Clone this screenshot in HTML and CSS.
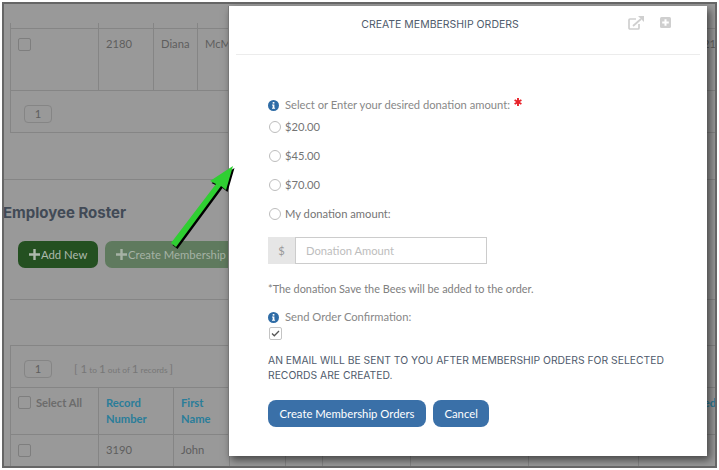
FILE: index.html
```html
<!DOCTYPE html>
<html lang="en">
<head>
<meta charset="utf-8">
<title>Create Membership Orders</title>
<link rel="stylesheet" href="styles.css">
</head>
<body>
<div class="frame">
  <table class="grid grid-top">
    <colgroup><col class="c1"><col class="c2"><col class="c3"><col class="c4"><col class="c5"></colgroup>
    <tr class="stub"><td></td><td></td><td></td><td></td><td></td></tr>
    <tr class="row-tall">
      <td><span class="box"></span></td><td>2180</td><td>Diana</td><td>McMillan</td><td class="end">1221</td>
    </tr>
    <tr class="row-pager"><td colspan="5"><span class="pager">1</span></td></tr>
  </table>
  <hr class="rule rule-a">
  <h2 class="roster">Employee Roster</h2>
  <div class="actions">
    <button class="act act-add" type="button"><svg class="plus" width="11" height="11" viewBox="0 0 11 11"><path d="M5.500 0v11M0 5.500h11" stroke="currentColor" stroke-width="2.400"/></svg>Add New</button>
    <button class="act act-create" type="button"><svg class="plus" width="11" height="11" viewBox="0 0 11 11"><path d="M5.500 0v11M0 5.500h11" stroke="currentColor" stroke-width="2.400"/></svg>Create Membership Orders</button>
  </div>
  <hr class="rule rule-b">
  <table class="grid grid-main">
    <colgroup><col class="m1"><col class="m2"><col class="m3"><col class="m4"><col class="m5"><col class="m6"><col class="m7"><col class="m8"><col class="m9"></colgroup>
    <tr class="row-pager"><td colspan="9"><span class="pager">1</span><span class="count"><big>[ 1</big> to <big>1</big> out of <big>1</big> records <big>]</big></span></td></tr>
    <tr class="row-head">
      <th class="sel"><div class="sel-in"><span class="box"></span>Select All</div></th>
      <th>Record Number</th><th>First Name</th><th></th><th></th><th></th><th></th><th></th><th class="end">Renewed</th>
    </tr>
    <tr class="row-body">
      <td><span class="box"></span></td><td>3190</td><td>John</td><td></td><td></td><td></td><td></td><td></td><td></td>
    </tr>
  </table>

  <section class="modal">
    <header class="modal-head">
      <h1 class="modal-title">CREATE MEMBERSHIP ORDERS</h1>
      <div class="modal-tools">
        <svg class="tool" width="16" height="14" viewBox="0 0 16 14"><path d="M11 8v4a1 1 0 0 1-1 1H2a1 1 0 0 1-1-1V4a1 1 0 0 1 1-1h6" fill="none" stroke="#cfcfcf" stroke-width="1.700"/><path d="M5 10L13 3" stroke="#cfcfcf" stroke-width="1.800"/><path d="M10 0h6v6z" fill="#cfcfcf"/></svg>
        <svg class="tool tool-plus" width="11" height="11" viewBox="0 0 11 11"><rect width="11" height="11" rx="1.500" fill="#cfcfcf"/><path d="M5.500 2.200v6.600M2.200 5.500h6.600" stroke="#fff" stroke-width="2"/></svg>
      </div>
    </header>
    <form class="modal-body">
      <div class="ask">
        <svg class="info" width="11" height="11" viewBox="0 0 11 11"><circle cx="5.500" cy="5.500" r="5.500" fill="#2f6ca6"/><rect x="4.700" y="2" width="1.700" height="1.600" fill="#fff"/><path d="M4 4.500h2.400v3.300h.7v1H4v-1h.7V5.500H4z" fill="#fff"/></svg>
        <span>Select or Enter your desired donation amount:</span>
        <svg class="star" width="8" height="8" viewBox="0 0 8 8"><path d="M4 0v8M.6 2L7.400 6M7.400 2L.6 6" stroke="#e8222a" stroke-width="1.900"/></svg>
      </div>
      <label class="choice"><span class="radio"></span>$20.00</label>
      <label class="choice"><span class="radio"></span>$45.00</label>
      <label class="choice"><span class="radio"></span>$70.00</label>
      <label class="choice"><span class="radio"></span>My donation amount:</label>
      <div class="amount"><span class="addon">$</span><span class="field">Donation Amount</span></div>
      <p class="note">*The donation Save the Bees will be added to the order.</p>
      <div class="confirm">
        <svg class="info" width="11" height="11" viewBox="0 0 11 11"><circle cx="5.500" cy="5.500" r="5.500" fill="#2f6ca6"/><rect x="4.700" y="2" width="1.700" height="1.600" fill="#fff"/><path d="M4 4.500h2.400v3.300h.7v1H4v-1h.7V5.500H4z" fill="#fff"/></svg>
        <span>Send Order Confirmation:</span>
      </div>
      <span class="check"><svg width="9" height="7" viewBox="0 0 9 7"><path d="M1 3.500l2.300 2.300L8 1" fill="none" stroke="#555" stroke-width="1.300"/></svg></span>
      <p class="notice">AN EMAIL WILL BE SENT TO YOU AFTER MEMBERSHIP ORDERS FOR SELECTED RECORDS ARE CREATED.</p>
      <div class="modal-actions">
        <button class="primary" type="button">Create Membership Orders</button>
        <button class="primary" type="button">Cancel</button>
      </div>
    </form>
  </section>

  <svg class="arrow" width="72" height="92" viewBox="0 0 72 92">
    <polygon points="63,2 56,26 51,22 6,83 1,79 46,20 40,17" fill="#000" transform="translate(1.500 2)"/>
    <polygon points="63,2 56,26 51,22 6,83 1,79 46,20 40,17" fill="#2fcf32"/>
  </svg>
</div>
</body>
</html>
```

FILE: styles.css
```css
* { box-sizing: border-box; }
html, body { margin: 0; padding: 0; background: #fff; }
body { width: 719px; height: 470px; overflow: hidden; font-family: Lato, "Open Sans", sans-serif; }

.frame {
  position: relative;
  width: 715px;
  height: 466px;
  margin: 2px 0 0 2px;
  border: 2px solid #666;
  background: #999;
  overflow: hidden;
  color: #5e5e5e;
  font-size: 11.200px;
}

.grid { border-collapse: collapse; table-layout: fixed; margin-left: 6px; }
.grid td, .grid th { border: 1px solid #858585; padding: 0; text-align: left; vertical-align: top; overflow: hidden; }
.grid-top { width: 706px; margin-top: 19px; }
.c1 { width: 88px; } .c2 { width: 55px; } .c3 { width: 44px; } .c4 { width: 484px; } .c5 { width: 35px; }
.stub td { height: 5px; border-top: 0; }
.row-tall td { height: 62px; padding: 8px 7px; white-space: nowrap; line-height: 14px; }
.row-tall td:first-child { padding: 9px 7px; }
.row-pager td { height: 42px; padding: 14px 13px 0; }
.end { text-align: right !important; padding-right: 0 !important; }

.box { display: block; width: 13px; height: 13px; border: 1px solid #7e7e7e; border-radius: 2px; flex: none; }
.pager {
  display: inline-block;
  width: 28px; height: 18px;
  border: 1px solid #858585; border-radius: 4px;
  text-align: center; line-height: 16px; vertical-align: top;
}

.rule { border: 0; border-top: 1px solid #858585; margin: 0; }
.rule-a { margin-top: 46px; }
.rule-b { margin: 31px 0 0 6px; }

.roster {
  margin: 25px 0 0 -1px;
  font-family: Inter, sans-serif;
  font-size: 15px; line-height: 16px; font-weight: 700;
  color: #414a56;
}

.actions { display: flex; gap: 7px; margin: 20px 0 0 14px; white-space: nowrap; }
.act {
  display: flex; align-items: center; gap: 1px;
  height: 27px; border: 0; border-radius: 7px; padding: 0 11px;
  font: 11.300px Lato, sans-serif; flex: none;
}
.act-add { width: 80px; background: #245021; color: #aeb9ad; }
.act-create { background: #5f7a5e; color: #a6b2a5; }
.plus { flex: none; }

.grid-main { width: 706px; margin-top: 45px; }
.m1 { width: 88px; } .m2 { width: 75px; } .m3 { width: 56px; } .m4 { width: 56px; } .m5 { width: 37px; }
.m6 { width: 88px; } .m7 { width: 118px; } .m8 { width: 110px; } .m9 { width: 78px; }
.count { margin-left: 22px; font-size: 8.300px; line-height: 18px; color: #777; vertical-align: top; }
.count big { font-size: 11.500px; }
.row-head th { height: 45px; padding: 7px; line-height: 16px; font-weight: 700; color: #2a7d99; }
.row-head th.sel { padding: 8px 7px; color: #6c6c6c; }
.sel-in { display: flex; gap: 5px; white-space: nowrap; line-height: 14px; }
.row-body td { height: 40px; padding: 8px 7px; line-height: 14px; }
.row-body td:first-child { padding: 9px 7px; }

.modal {
  position: absolute;
  left: 224px; top: 2px;
  width: 479px; height: 450px;
  background: #fff;
  border-left: 1px solid #777;
  box-shadow: 3px 4px 8px rgba(0,0,0,.55);
  z-index: 2;
  color: #7f7f7f;
}
.modal-head {
  display: flex; align-items: flex-start; justify-content: center;
  position: relative;
  height: 49px; margin: 0 7px; border-bottom: 1px solid #ececec;
}
.modal-title {
  margin: 13px 56px 0 0;
  font-family: Inter, sans-serif; font-size: 10.500px; line-height: 12px; font-weight: 400;
  color: #4f5b6c;
}
.modal-tools { position: absolute; top: 10px; left: 392px; display: flex; gap: 16px; }
.tool { display: block; }
.tool-plus { margin-top: 1px; }

.modal-body { display: flex; flex-direction: column; align-items: flex-start; padding: 43px 0 0 39px; }
.ask, .confirm { display: flex; align-items: center; gap: 6px; line-height: 14px; color: #888; }
.ask .star { margin: -6px 0 0 -2px; }
.info { flex: none; }
.choice { display: flex; align-items: center; gap: 4px; height: 14px; margin-top: 15px; color: #757575; line-height: 14px; }
.ask + .choice { margin-top: 8px; }
.radio { width: 12px; height: 12px; margin-left: 1px; border: 1px solid #bdbdbd; border-radius: 50%; }

.amount { display: flex; height: 27px; width: 219px; margin-top: 16px; }
.addon { width: 27px; background: #e6e6e6; color: #999; text-align: center; line-height: 27px; }
.field { flex: 1; border: 1px solid #ccc; padding: 0 10px; color: #bdbdbd; line-height: 25px; }
.note { margin: 18px 0 0; line-height: 14px; font-size: 10.900px; color: #808080; }
.confirm { margin-top: 14px; }
.check {
  display: flex; align-items: center; justify-content: center;
  width: 13px; height: 13px; margin: 3px 0 0 1px;
  border: 1px solid #c4c4c4; border-radius: 2px;
}
.notice {
  margin: 13px 0 0; width: 420px;
  font-family: Inter, sans-serif; font-size: 10.350px; line-height: 15px;
  color: #4f5b6c;
}
.modal-actions { display: flex; gap: 7px; margin-top: 17px; }
.primary {
  height: 27px; border: 0; border-radius: 8px; padding: 0 11.500px;
  background: #3a70a8; color: #fff;
  font: 11.300px Lato, sans-serif;
}

.arrow { position: absolute; left: 166px; top: 160px; z-index: 3; }
```
